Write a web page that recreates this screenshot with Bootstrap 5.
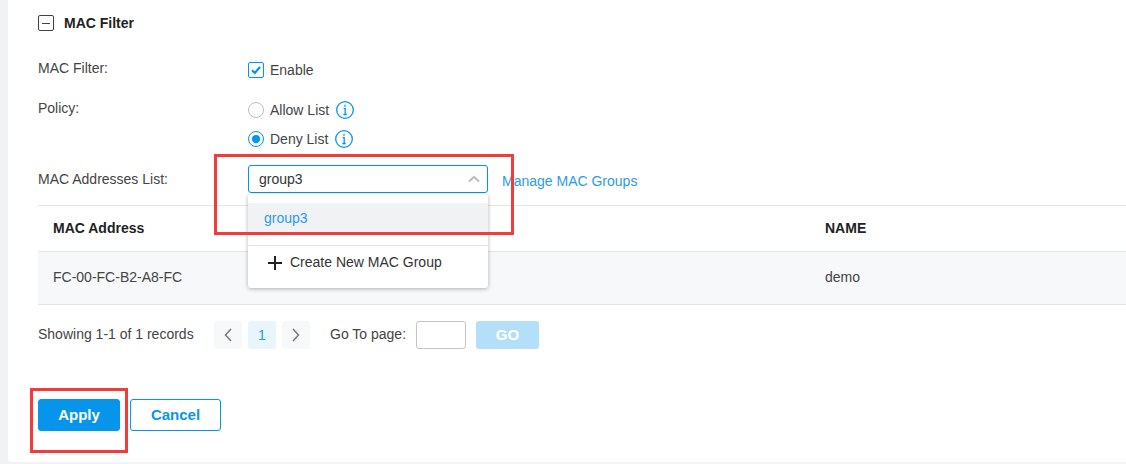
<!DOCTYPE html>
<html lang="en">
<head>
<meta charset="utf-8">
<title>MAC Filter</title>
<link href="https://cdn.jsdelivr.net/npm/bootstrap@5.3.0/dist/css/bootstrap.min.css" rel="stylesheet">
<style>
html,body{height:464px;overflow:hidden;background:#f1f2f4;}
body{font-family:"Liberation Sans",Arial,sans-serif;font-size:14px;color:#444;position:relative;}
.sheet{margin-left:8px;height:462px;background:#fff;border-radius:0 0 0 4px;padding-left:30px;}
.title-row{height:46px;color:#222;font-weight:700;gap:10px;}
.collapse-box{width:16px;height:16px;border:1px solid #3c4150;border-radius:2px;display:flex;align-items:center;justify-content:center;}
.collapse-box i{display:block;width:8px;height:1px;background:#3c4150;}
.lbl{width:210px;flex:none;}
.lbl-up{padding-top:13px;}
.lbl-first{padding-top:12px;}
.check-box{width:16px;height:16px;border:1.500px solid #0095ee;border-radius:2px;display:flex;align-items:center;justify-content:center;}
.rad{width:16px;height:16px;border:1.500px solid #bbb;border-radius:50%;flex:none;}
.rad.on{border-color:#0095ee;display:flex;align-items:center;justify-content:center;}
.rad.on i{display:block;width:8px;height:8px;border-radius:50%;background:#0095ee;}
.pick{width:240px;height:28px;border:1px solid #0095ee;border-radius:3px;padding:0 7px 0 10px;color:#333;}
.blue-link{color:#2a9bee;text-decoration:none;margin-top:6px;margin-left:14px;}
.opt-row{height:18px;gap:6px;}
.opt-row + .opt-row{margin-top:11px;}
.opt-row svg{margin-left:1px;}
.enable-row{gap:6px;padding-top:16px;}
.enable-row span:last-child{line-height:16px;}
.grid-head{height:47px;border-top:1px solid #e5e5e5;border-bottom:1px solid #e5e5e5;font-weight:700;color:#222;}
.grid-row{height:53px;background:#f7f8fa;border-bottom:1px solid #e5e5e5;padding-bottom:2px;}
.cell-a{width:787px;padding-left:15px;flex:none;}
.pager{margin-top:16px;height:28px;}
.pager-text{width:176px;padding-bottom:2px;}
.pg-btn{width:28px;height:28px;border-radius:3px;background:#f7f8fa;display:flex;align-items:center;justify-content:center;}
.pg-btn.cur{background:#e9f5fd;color:#2a9bee;}
.goto-text{width:86px;padding-bottom:2px;}
.goto{width:50px;height:28px;border:1px solid #c4c4c4;border-radius:3px;background:#fff;}
.go{width:63px;height:28px;background:#b3dff8;border-radius:3px;color:#fff;font-weight:700;font-size:15px;display:flex;align-items:center;justify-content:center;margin-left:10px;}
.apply,.cancel{height:32px;border-radius:3px;font-weight:700;font-size:15px;padding:0;}
.apply{width:82px;background:#0795ec;border:1px solid #0795ec;color:#fff;}
.cancel{width:91px;background:#fff;border:1px solid #0795ec;color:#0795ec;}
.drop-panel{position:absolute;left:248px;top:194px;width:240px;height:94px;background:#fff;border-radius:3px;box-shadow:0 1px 4px rgba(0,0,0,.3);z-index:2;padding-top:9px;}
.drop-sel{height:30px;background:#f1f2f4;color:#2a9bee;padding-left:16px;display:flex;align-items:center;}
.drop-new{border-top:1px solid #e5e5e5;margin-top:12px;height:34px;padding-left:20px;gap:8px;color:#333;}
.mark-box{position:absolute;border:3px solid #f23b3b;z-index:3;pointer-events:none;}
.mark-a{left:214px;top:154px;width:300px;height:81px;}
.mark-b{left:30px;top:388px;width:98px;height:65px;}
</style>
</head>
<body>
<div class="sheet">
  <div class="d-flex align-items-center title-row"><span class="collapse-box"><i></i></span><span>MAC Filter</span></div>
  <div class="d-flex" style="height:39px">
    <div class="lbl lbl-first">MAC Filter:</div>
    <div class="d-flex align-items-start enable-row"><span class="check-box"><svg width="12" height="12" viewBox="0 0 12 12"><path d="M2 6.200 4.800 8.900 10 3" fill="none" stroke="#0095ee" stroke-width="2.200"/></svg></span><span>Enable</span></div>
  </div>
  <div class="d-flex" style="height:62px">
    <div class="lbl lbl-up">Policy:</div>
    <div class="pt-3">
      <div class="d-flex align-items-center opt-row">
        <span class="rad"></span><span>Allow List</span>
        <svg width="18" height="18" viewBox="0 0 18 18"><circle cx="9" cy="9" r="8.300" fill="none" stroke="#0095ee" stroke-width="1.300"/><path d="M9 3.800v2M7.600 7.700H9.200V13.500M7.400 13.500h3.400" fill="none" stroke="#0095ee" stroke-width="1.300"/></svg>
      </div>
      <div class="d-flex align-items-center opt-row">
        <span class="rad on"><i></i></span><span>Deny List</span>
        <svg width="18" height="18" viewBox="0 0 18 18"><circle cx="9" cy="9" r="8.300" fill="none" stroke="#0095ee" stroke-width="1.300"/><path d="M9 3.800v2M7.600 7.700H9.200V13.500M7.400 13.500h3.400" fill="none" stroke="#0095ee" stroke-width="1.300"/></svg>
      </div>
    </div>
  </div>
  <div class="d-flex" style="height:58px;padding-top:18px">
    <div class="lbl" style="padding-top:4px">MAC Addresses List:</div>
    <div class="d-flex align-items-start">
      <div class="pick d-flex align-items-center justify-content-between"><span>group3</span><svg width="12" height="8" viewBox="0 0 12 8"><path d="M1 6.500 6 1.800 11 6.500" fill="none" stroke="#bbb" stroke-width="2"/></svg></div>
      <a class="blue-link" href="#">Manage MAC Groups</a>
    </div>
  </div>
  <div class="d-flex align-items-center grid-head"><div class="cell-a">MAC Address</div><div>NAME</div></div>
  <div class="d-flex align-items-center grid-row"><div class="cell-a">FC-00-FC-B2-A8-FC</div><div>demo</div></div>
  <div class="d-flex align-items-center pager">
    <span class="pager-text">Showing 1-1 of 1 records</span>
    <div class="d-flex" style="gap:6px;margin-right:20px">
      <span class="pg-btn"><svg width="10" height="16" viewBox="0 0 10 16"><path d="M8 2 2.500 8 8 14" fill="none" stroke="#777" stroke-width="1.500"/></svg></span>
      <span class="pg-btn cur">1</span>
      <span class="pg-btn"><svg width="10" height="16" viewBox="0 0 10 16"><path d="M2 2 7.500 8 2 14" fill="none" stroke="#777" stroke-width="1.500"/></svg></span>
    </div>
    <span class="goto-text">Go To page:</span>
    <span class="goto"></span>
    <span class="go">GO</span>
  </div>
  <div class="d-flex" style="gap:10px;margin-top:50px">
    <button class="btn apply" type="button">Apply</button>
    <button class="btn cancel" type="button">Cancel</button>
  </div>
</div>
<div class="drop-panel">
  <div class="drop-sel">group3</div>
  <div class="d-flex align-items-center drop-new"><svg width="14" height="14" viewBox="0 0 14 14"><path d="M7 0v14M0 7h14" stroke="#222" stroke-width="2"/></svg><span>Create New MAC Group</span></div>
</div>
<div class="mark-box mark-a"></div>
<div class="mark-box mark-b"></div>
<script src="https://cdn.jsdelivr.net/npm/bootstrap@5.3.0/dist/js/bootstrap.bundle.min.js"></script>
</body>
</html>
